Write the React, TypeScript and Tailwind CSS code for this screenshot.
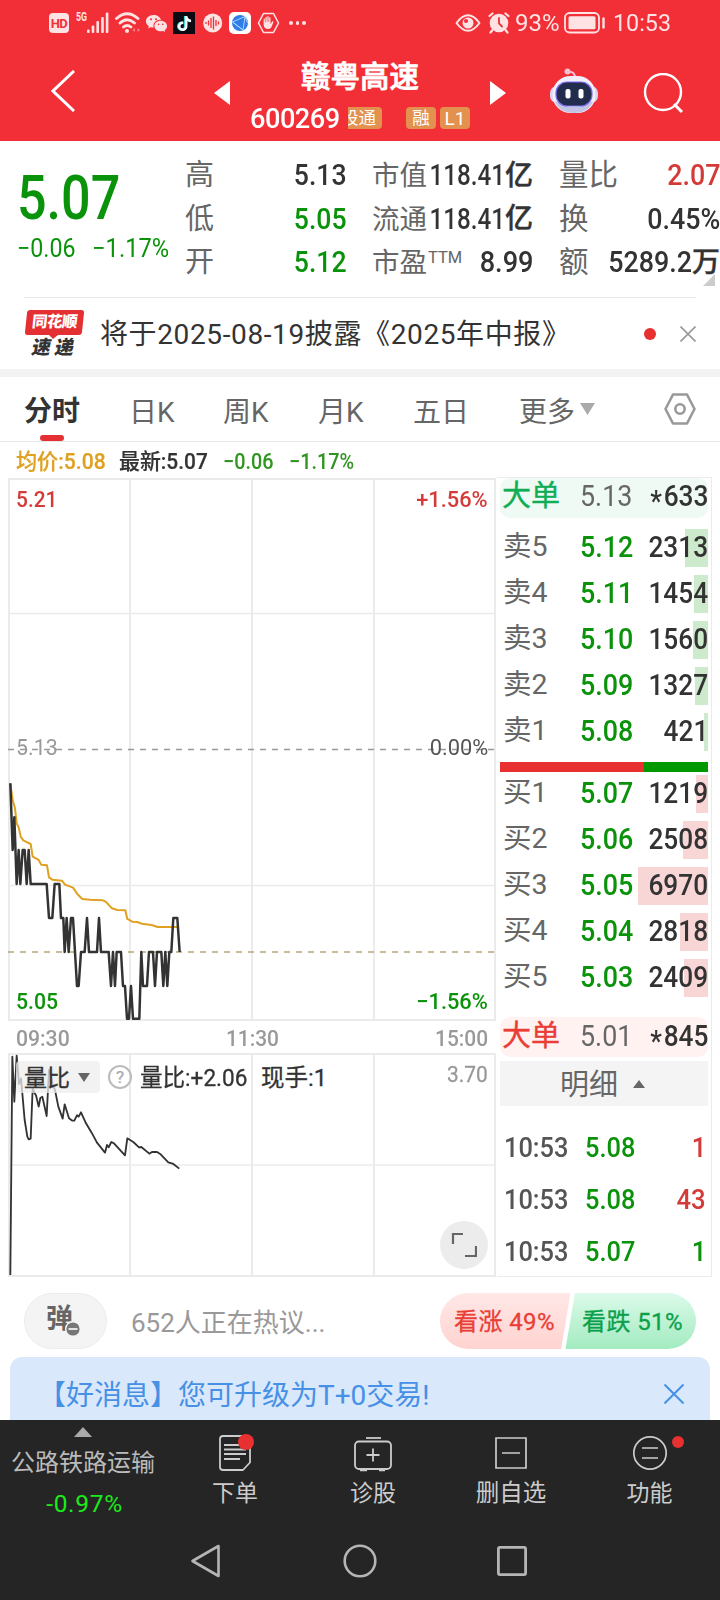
import { FaTiktok } from "react-icons/fa";
import { IoHandLeft } from "react-icons/io5";
import { RiWechatFill } from "react-icons/ri";

const green = "text-[#0a930a]";
const red = "text-[#d43a38]";
const dark = "text-[#333]";

const quoteColumns = [
  {
    labelSize: "text-[29px]",
    valueScale: "scale-x-[0.9]",
    rows: [
      { label: "高", value: "5.13", color: dark },
      { label: "低", value: "5.05", color: green },
      { label: "开", value: "5.12", color: green },
    ],
  },
  {
    labelSize: "text-[27.5px]",
    valueScale: "scale-x-[0.82]",
    rows: [
      { label: "市值", value: "118.41", unit: "亿", color: dark },
      { label: "流通", value: "118.41", unit: "亿", color: dark },
      { label: "市盈", sup: "TTM", value: "8.99", color: dark },
    ],
  },
  {
    labelSize: "text-[29.5px]",
    valueScale: "scale-x-[0.91]",
    rows: [
      { label: "量比", value: "2.07", color: red },
      { label: "换", value: "0.45%", color: dark },
      { label: "额", value: "5289.2", unit: "万", color: dark },
    ],
  },
];

const sells = [
  { name: "卖5", price: "5.12", volume: "2313", bar: 23 },
  { name: "卖4", price: "5.11", volume: "1454", bar: 14 },
  { name: "卖3", price: "5.10", volume: "1560", bar: 15 },
  { name: "卖2", price: "5.09", volume: "1327", bar: 13 },
  { name: "卖1", price: "5.08", volume: "421", bar: 4 },
];

const buys = [
  { name: "买1", price: "5.07", volume: "1219", bar: 12 },
  { name: "买2", price: "5.06", volume: "2508", bar: 25 },
  { name: "买3", price: "5.05", volume: "6970", bar: 70 },
  { name: "买4", price: "5.04", volume: "2818", bar: 28 },
  { name: "买5", price: "5.03", volume: "2409", bar: 24 },
];

const trades = [
  { time: "10:53", price: "5.08", volume: "1", color: red },
  { time: "10:53", price: "5.08", volume: "43", color: red },
  { time: "10:53", price: "5.07", volume: "1", color: green },
];

// Chart series, in thirds of a pixel
const priceLine =
  "31,130 38,330 43,232 50,432 56,330 61,432 68,330 74,330 80,432 86,330 92,432 140,432 147,534 157,534 164,432 178,432 183,534 190,534 194,636 200,534 206,636 213,534 219,534 231,738 236,738 243,636 254,636 261,534 267,636 291,636 297,534 303,636 326,636 333,738 339,636 345,738 350,636 363,636 369,738 375,738 381,836 387,836 393,738 399,836 418,836 424,636 429,738 441,738 447,636 459,636 465,738 471,636 484,636 490,738 496,636 502,738 508,636 514,636 520,534 532,534 539,636";
const averageLine =
  "31,130 38,180 45,205 50,250 56,262 62,290 70,301 92,312 98,350 116,360 124,374 141,376 147,412 157,419 186,422 195,434 219,443 232,462 247,477 270,479 308,481 317,485 336,505 352,510 376,511 382,537 397,545 412,546 425,551 455,555 473,561 535,561";
const ratioLine =
  "31,795 37,140 43,275 50,137 57,222 63,205 74,330 82,380 86,388 92,386 98,235 104,250 108,256 116,290 121,264 127,260 140,318 147,180 152,190 158,225 165,240 175,290 188,326 194,283 207,325 217,332 223,332 231,316 236,320 243,307 258,340 275,368 291,398 315,428 321,405 326,412 334,396 342,400 375,436 382,385 400,396 417,412 424,411 448,431 456,426 471,426 482,433 505,457 520,462 538,476";

const StatusBar = () => (
  <div className="flex h-[46px] items-center text-[#ffe3e4]">
    <div className="ml-[49px] flex h-5 w-5 items-center justify-center rounded bg-[#ffe3e4] text-[13px] font-bold leading-none tracking-[-0.5px] text-[#f22f37]">
      HD
    </div>
    <svg className="ml-[7px] h-6 w-[34px]" viewBox="0 0 34 24" fill="currentColor">
      <text x="0" y="10" fontSize="12" fontWeight="700" textLength="11" lengthAdjust="spacingAndGlyphs">5G</text>
      <rect x="11" y="18.500" width="2.600" height="3.500" rx="1" />
      <rect x="15.700" y="14.500" width="2.600" height="7.500" rx="1" />
      <rect x="20.400" y="10" width="2.600" height="12" rx="1" />
      <rect x="25.200" y="6" width="2.600" height="16" rx="1" />
      <rect x="29.800" y="1.500" width="2.600" height="20.500" rx="1" />
    </svg>
    <svg className="ml-[5px] h-6 w-[26px]" viewBox="0 0 26 24" fill="none" stroke="currentColor" strokeWidth="2.800" strokeLinecap="round">
      <path d="M1.500 7.500Q12 -2 23 7.500M5 12Q12 5.500 19.500 12M8.500 16Q12 13 16 16" />
      <circle cx="12" cy="20" r="1" fill="currentColor" strokeWidth="2" />
      <path d="M20 17v4l-2.500-2zM22.500 17v4l2.500-2z" stroke="none" fill="#f88085" />
    </svg>
    <RiWechatFill className="ml-1 h-[23px] w-[23px]" />
    <div className="ml-[5px] flex h-[22px] w-[22px] items-center justify-center bg-[#0d0a14] text-white">
      <FaTiktok className="h-[15px] w-[15px] drop-shadow-[-1px_0_0_#25d5d0]" />
    </div>
    <svg className="ml-2 h-5 w-5" viewBox="0 0 20 20">
      <circle cx="9.700" cy="10" r="9.500" fill="#ffe3e4" />
      <path d="M3 9v2M5.500 7.500v5M8 5v10M10.500 3.500v13M13 7v6M15.500 8.500v3" stroke="#f22f37" strokeWidth="1.300" />
    </svg>
    <svg className="ml-1.5 h-[22px] w-[22px]" viewBox="0 0 22 22">
      <rect width="22" height="22" rx="5" fill="#fff" />
      <circle cx="11" cy="11" r="8" fill="#2f7de8" />
      <path d="M3.500 10 16 4.500 14 18ZM3.500 10 14 18M16 4.500 18.500 11" fill="none" stroke="#b6dcff" strokeWidth="0.900" />
    </svg>
    <div className="relative ml-1.5 h-[22px] w-[23px]">
      <svg className="h-full w-full" viewBox="0 0 23 22" fill="none" stroke="currentColor" strokeWidth="1.600" strokeLinejoin="round">
        <path d="M6.500 1.500h10l5 9.500-5 9.500h-10L1.500 11z" />
      </svg>
      <IoHandLeft className="absolute left-[5px] top-1 h-[13px] w-[13px]" />
    </div>
    <div className="ml-[9px] flex gap-[3px]">
      <i className="h-[3.5px] w-[3.5px] rounded-full bg-[#ffe3e4]" />
      <i className="h-[3.5px] w-[3.5px] rounded-full bg-[#ffe3e4]" />
      <i className="h-[3.5px] w-[3.5px] rounded-full bg-[#ffe3e4]" />
    </div>
    <svg className="ml-[149px] h-[18px] w-[26px]" viewBox="0 0 26 18" fill="none" stroke="currentColor" strokeWidth="2">
      <path d="M1.500 9Q13-6.500 24.500 9 13 24.500 1.500 9Z" strokeLinejoin="round" />
      <circle cx="13" cy="9" r="5.500" fill="currentColor" stroke="none" />
      <circle cx="11" cy="7" r="2" fill="#f22f37" stroke="none" />
    </svg>
    <svg className="ml-[7px] h-[22px] w-[22px]" viewBox="0 0 22 22" fill="none" stroke="currentColor" strokeWidth="2.200" strokeLinecap="round">
      <circle cx="11" cy="11" r="9.300" fill="currentColor" stroke="none" />
      <path d="M1.500 4 4.500 1.500M20.500 4l-3-2.500M4.500 18l-2 2.500M17.500 18l2 2.500" />
      <path d="M11 6v5.500l3 3" stroke="#f22f37" strokeWidth="1.800" />
    </svg>
    <span className="ml-[5px] w-[44px] origin-left scale-x-[0.98] pt-px text-[24.500px] leading-none">93%</span>
    <svg className="ml-[5px] h-[22px] w-[42px]" viewBox="0 0 42 22" fill="none" stroke="currentColor" strokeWidth="1.800">
      <rect x="1" y="1" width="34" height="19.500" rx="4.500" />
      <rect x="4.500" y="4.200" width="27" height="13" rx="1.500" fill="currentColor" stroke="none" />
      <path d="M39.500 6.500v9" strokeWidth="2.400" strokeLinecap="round" />
    </svg>
    <span className="ml-[7px] w-[60px] origin-left scale-x-[0.95] pt-px text-[24.500px] leading-none">10:53</span>
  </div>
);

const RobotIcon = () => (
  <svg className="ml-[44px] h-[46px] w-12" viewBox="0 0 48 46">
    <path d="M18 4q7-1 7 6" fill="none" stroke="#f5c3da" strokeWidth="2" />
    <circle cx="17.500" cy="3.500" r="3" fill="#f3bfd2" />
    <rect x="0" y="18" width="48" height="17" rx="7" fill="#d9d3ee" />
    <rect x="2.500" y="8" width="43" height="37" rx="18" fill="#f1effb" />
    <path d="M5 33q19 12 38 0-4 12-19 12T5 33z" fill="#c3c4e4" />
    <rect x="6" y="14" width="36" height="24" rx="11" fill="#222c4c" stroke="#7b6cf0" strokeWidth="1.200" />
    <rect x="15.500" y="21" width="5" height="9.500" rx="2" fill="#fff" />
    <rect x="28.500" y="21" width="5" height="9.500" rx="2" fill="#fff" />
  </svg>
);

const Header = () => (
  <header className="h-[141px] bg-[#f22f37] text-white">
    <StatusBar />
    <div className="flex h-[90px] items-center">
      <svg className="ml-[51px] h-[42px] w-6" viewBox="0 0 24 42" fill="none" stroke="#fff" strokeWidth="3">
        <path d="M23 1 2 21l21 20" />
      </svg>
      <svg className="ml-[139px] mt-1 h-6 w-4" viewBox="0 0 16 24" fill="#fff">
        <path d="M16 0v24L0 12z" />
      </svg>
      <div className="ml-[15px] mt-3 w-[245px]">
        <h1 className="pl-14 text-[29.500px] font-medium leading-[41px] [-webkit-text-stroke:0.8px]">赣粤高速</h1>
        <div className="flex h-[40px] items-center">
          <span className="ml-[5px] w-[98px] origin-left scale-x-[0.97] pt-[3px] text-[28px] font-medium leading-none tracking-[-0.500px]">600269</span>
          <span className="flex h-[22px] w-[34px] justify-end overflow-hidden rounded-r-sm bg-[#e2914f] pr-1.5 text-[17.500px] leading-[23px]">
            <span className="shrink-0">股通</span>
          </span>
          <span className="ml-6 h-[22px] w-[30px] rounded-sm bg-[#e2914f] text-center text-[17.500px] leading-[23px]">融</span>
          <span className="ml-1 h-[22px] w-[30px] rounded-sm bg-[#e2914f] text-center text-[19px] leading-[24px]">L1</span>
        </div>
      </div>
      <svg className="mt-1 h-6 w-4" viewBox="0 0 16 24" fill="#fff">
        <path d="M0 0v24l16-12z" />
      </svg>
      <RobotIcon />
      <svg className="ml-[45px] mt-1 h-10 w-10" viewBox="0 0 40 40" fill="none" stroke="#fff" strokeWidth="2.400">
        <circle cx="20" cy="19" r="18" />
        <path d="m31 31 8 8" strokeWidth="3" />
      </svg>
    </div>
  </header>
);

const Quote = () => (
  <section className="relative flex h-[156px] pt-[13px]">
    <div className={`w-[186px] pl-[17px] ${green}`}>
      <div className="mt-[12px] w-[120px] origin-left scale-x-[0.84] text-[62px] font-medium leading-[64px]">5.07</div>
      <div className="mt-[3px] flex text-[25.500px] leading-[31px]">
        <span className="w-[75px] origin-left scale-x-[0.91]">−0.06</span>
        <span className="origin-left scale-x-[0.93]">−1.17%</span>
      </div>
    </div>
    <div className="flex gap-[26px]">
      {quoteColumns.map((column, i) => (
        <div key={i} className="w-[161px]">
          {column.rows.map((item) => (
            <div key={item.label} className="flex h-[43.500px] items-center justify-between whitespace-nowrap leading-none">
              <span className={`flex w-0 text-[#666] ${column.labelSize}`}>
                {item.label}
                {"sup" in item && <span className="ml-px mt-[1px] text-[16.500px] leading-none">{item.sup}</span>}
              </span>
              <span className={`flex items-center text-[29.500px] font-medium ${item.color}`}>
                <span className={`origin-right ${"sup" in item ? "scale-x-[0.92]" : column.valueScale}`}>{item.value}</span>
                {"unit" in item && <span className="text-[28px] [-webkit-text-stroke:0.4px]">{item.unit}</span>}
              </span>
            </div>
          ))}
        </div>
      ))}
    </div>
    <svg className="absolute bottom-[11px] right-[5px] h-3 w-3" viewBox="0 0 12 12" fill="#ccc">
      <path d="M12 0v12H0z" />
    </svg>
  </section>
);

const NewsRow = () => (
  <section className="mx-6 flex h-[72px] items-center border-t border-[#e6e6e6]">
    <div className="flex w-[60px] flex-col items-center">
      <div className="flex h-[25px] w-[57px] -skew-x-6 items-center justify-center rounded-[3px] bg-[#e53033] text-[15.500px] font-black leading-none tracking-[-0.500px] text-white">
        同花顺
      </div>
      <svg className="h-1 w-3" viewBox="0 0 12 4" fill="#e53033">
        <path d="M1 0h9L5 4z" />
      </svg>
      <div className="-mt-[1px] ml-[-2px] flex -skew-x-12 gap-1 text-[19px] font-black leading-[20px] text-[#333]">
        <span>速</span>
        <span>递</span>
      </div>
    </div>
    <p className="ml-[16px] whitespace-nowrap pt-[3px] text-[28px] leading-none tracking-[0.620px] text-[#333]">将于2025-08-19披露《2025年中报》</p>
    <i className="ml-auto h-3 w-3 rounded-full bg-[#e83030]" />
    <svg className="ml-6 h-4 w-4" viewBox="0 0 16 16" stroke="#999" strokeWidth="1.600">
      <path d="m.5.500 15 15M15.500.500l-15 15" />
    </svg>
  </section>
);

const Tabs = () => (
  <nav className="flex h-[65px] items-center border-b border-[#e6e6e6] text-[28px] leading-none text-[#666]">
    <div className="ml-6 flex h-full w-[105px] flex-col justify-end font-bold text-[#333]">
      分时
      <i className="ml-4 mt-[9px] h-1.5 w-6 rounded-full bg-[#e53033]" />
    </div>
    <span className="w-[94px] pt-[7px]">日K</span>
    <span className="w-[95px] pt-[7px]">周K</span>
    <span className="w-[95px] pt-[7px]">月K</span>
    <span className="w-[106px] pt-[7px]">五日</span>
    <span className="pt-[7px]">更多</span>
    <svg className="ml-[5px] h-3 w-[15px]" viewBox="0 0 15 12" fill="#aaa">
      <path d="M0 0h15L7.500 12z" />
    </svg>
    <svg className="ml-[69px] h-8 w-8" viewBox="0 0 32 32" fill="none" stroke="#999" strokeWidth="2.600" strokeLinejoin="round">
      <path d="M9 1.500h14L30.500 16 23 30.500H9L1.500 16z" />
      <circle cx="16" cy="16" r="4.700" />
    </svg>
  </nav>
);

const Charts = () => (
  <div className="relative h-[800px] w-[497px] text-[22.500px] leading-none">
    <svg className="block h-[800px] w-[497px]" viewBox="0 477 497 800" fill="none">
      <g stroke="#ebebeb" strokeWidth="2">
        <path d="M8 479h488M8 1020h488M8 1054h488M8 1276h488" />
        <path d="M9 478v543M130 478v543M252 478v543M374 478v543M495 478v543" />
        <path d="M9 1053v224M130 1053v224M252 1053v224M374 1053v224M495 1053v224" />
        <path d="M8 613.500h488M8 885.500h488M8 1165h488" strokeWidth="1.500" />
      </g>
      <path d="M8 749.500h487" stroke="#999" strokeWidth="1.500" strokeDasharray="6 6" />
      <path d="M8 952h487" stroke="#b8a878" strokeWidth="1.700" strokeDasharray="6 6" />
      <g strokeLinejoin="round">
        <polyline points={averageLine} transform="translate(0 740) scale(.3333)" stroke="#e0a020" strokeWidth="6" />
        <polyline points={priceLine} transform="translate(0 740) scale(.3333)" stroke="#333" strokeWidth="7.500" />
        <polyline points={ratioLine} transform="translate(0 1010) scale(.3333)" stroke="#333" strokeWidth="5.500" />
      </g>
    </svg>

    {/* Axis labels */}
    <span className={`absolute left-4 top-[11px] origin-left scale-x-[0.93] font-medium ${red}`}>5.21</span>
    <span className={`absolute right-[9px] top-[11px] origin-right scale-x-[0.97] font-medium ${red}`}>+1.56%</span>
    <span className="absolute left-4 top-[259px] origin-left scale-x-[0.95] text-[#999]">5.13</span>
    <span className="absolute right-[9px] top-[259px] origin-right scale-x-[0.97] text-[#555]">0.00%</span>
    <span className={`absolute left-4 top-[513px] origin-left scale-x-[0.94] font-medium ${green}`}>5.05</span>
    <span className={`absolute right-[9px] top-[513px] origin-right scale-x-[0.97] font-medium ${green}`}>−1.56%</span>
    <div className="absolute left-4 right-[9px] top-[550px] flex justify-between text-[#999]">
      <span className="origin-left scale-x-[0.94] font-medium">09:30</span>
      <span className="scale-x-[0.93] pl-[2px] font-medium">11:30</span>
      <span className="origin-right scale-x-[0.93] font-medium">15:00</span>
    </div>
    <div className="absolute left-4 right-[9px] top-[584px] flex h-8 items-center text-[#333] [-webkit-text-stroke:0.3px]">
      <div className="flex h-8 w-[84px] items-center rounded bg-[#eeeeee]/75 pl-2">
        <span className="pt-[3px] text-[23px]">量比</span>
        <svg className="ml-[8px] h-[9px] w-3" viewBox="0 0 12 9" fill="#666">
          <path d="M0 0h12L6 9z" />
        </svg>
      </div>
      <span className="ml-2 flex h-6 w-6 items-center justify-center rounded-full border-2 border-[#bbb] text-[17px] text-[#aaa]">?</span>
      <span className="ml-2 w-[121px] origin-left scale-x-[0.96] whitespace-nowrap pt-[3px] text-[23.500px]">量比:+2.06</span>
      <span className="whitespace-nowrap pt-[3px] text-[23.500px]">现手:1</span>
      <span className="-mt-1.5 ml-auto origin-right scale-x-[0.93] text-[#999]">3.70</span>
    </div>
    <div className="absolute bottom-[8px] right-[9px] flex h-12 w-12 items-center justify-center rounded-full bg-[#ececec]">
      <svg className="h-[26px] w-[26px]" viewBox="0 0 26 26" fill="none" stroke="#666" strokeWidth="2.200">
        <path d="M2 12V2h10M25 14v10H14" />
      </svg>
    </div>
  </div>
);

const BookRow = ({ name, price, volume, bar, side }) => (
  <div className="relative flex h-[38px] items-center pb-[1px] pl-[3px] text-[28.500px] leading-none">
    <i className={`absolute right-0 top-0 h-[38px] ${side === "sell" ? "bg-[#cdeacd]" : "bg-[#f9d6d6]"}`} style={{ width: bar }} />
    <span className="relative w-[77px] text-[#666]">{name}</span>
    <span className={`relative origin-left scale-x-[0.91] text-[29.500px] font-medium ${green}`}>{price}</span>
    <span className="relative ml-auto origin-right scale-x-[0.89] text-[29.500px] font-medium text-[#333]">{volume}</span>
  </div>
);

const BigOrder = ({ className, price, volume }) => (
  <div className={`flex h-10 items-center rounded-[10px] pl-[2px] text-[29px] leading-none ${className}`}>
    <span className="w-[78px] [-webkit-text-stroke:0.4px]">大单</span>
    <span className="origin-left scale-x-[0.91] text-[29.500px] text-[#666]">{price}</span>
    <span className="ml-auto flex origin-right scale-x-[0.89] text-[29.500px] font-medium text-[#333]">
      <span className="mt-[5px] -mb-[5px] pr-0.5">*</span>
      {volume}
    </span>
  </div>
);

const OrderBook = () => (
  <div className="h-[800px] w-[215px] border border-l-0 border-[#ebebeb] pl-[3px] pr-[3px]">
    <BigOrder className="bg-[#f0faf5] pb-[3px] text-[#0fae55]" price="5.13" volume="633" />
    <div className="mt-[11px] flex flex-col gap-2">
      {sells.map((row) => (
        <BookRow key={row.name} side="sell" {...row} />
      ))}
    </div>
    <div className="mt-[11px] flex h-[10px]">
      <i className="w-[144px] bg-[#e83030]" />
      <i className="grow bg-[#009900]" />
    </div>
    <div className="mb-5 mt-[3px] flex flex-col gap-2">
      {buys.map((row) => (
        <BookRow key={row.name} side="buy" {...row} />
      ))}
    </div>
    <BigOrder className="bg-[#fff2f1] pb-[1px] text-[#ea3d35]" price="5.01" volume="845" />
    <div className="mt-1 flex h-[45px] items-center bg-[#f4f4f4] pl-[60px] text-[29px] leading-none text-[#666]">
      <span className="pt-1">明细</span>
      <svg className="ml-[15px] h-2 w-3" viewBox="0 0 12 8" fill="#666">
        <path d="M0 8h12L6 0z" />
      </svg>
    </div>
    <div className="mt-[16px]">
      {trades.map((trade, i) => (
        <div key={i} className="flex h-[52px] items-center pl-1 pr-[2px] text-[27px] leading-none">
          <span className="w-[81px] origin-left scale-x-[0.94] font-medium text-[#555]">{trade.time}</span>
          <span className={`origin-left scale-x-[0.94] font-medium ${green}`}>{trade.price}</span>
          <span className={`ml-auto origin-right scale-x-[0.95] font-medium ${trade.color}`}>{trade.volume}</span>
        </div>
      ))}
    </div>
  </div>
);

const Discussion = () => (
  <section className="flex h-[80px] items-center px-6 pt-[8px]">
    <div className="flex h-14 w-[83px] items-center justify-center rounded-full border border-[#ececec] bg-[#f4f4f4]">
      <div className="relative -ml-3 -mt-1 text-[27px] font-bold leading-none text-[#666]">
        弹
        <svg className="absolute -right-2 bottom-[-4px] h-4 w-4" viewBox="0 0 16 16">
          <circle cx="8" cy="8" r="7.300" fill="#777" stroke="#f4f4f4" strokeWidth="1.400" />
          <path d="M3.500 8h9" stroke="#fff" strokeWidth="1.600" />
        </svg>
      </div>
    </div>
    <span className="ml-[24px] pt-[3px] text-[26px] leading-none text-[#999]">652人正在热议...</span>
    <div className="relative ml-auto flex h-14 w-64 items-center overflow-hidden rounded-full text-[24px] leading-none [-webkit-text-stroke:0.3px]">
      <svg className="absolute inset-0 h-14 w-64" viewBox="0 0 256 56">
        <defs>
          <linearGradient id="rise" x2="0" y2="1">
            <stop stopColor="#ffe8e7" />
            <stop offset="1" stopColor="#ffd3d0" />
          </linearGradient>
          <linearGradient id="fall" x2="0" y2="1">
            <stop stopColor="#dcfaea" />
            <stop offset="1" stopColor="#a2ebc0" />
          </linearGradient>
        </defs>
        <path d="M0 0h130.500L121 56H0z" fill="url(#rise)" stroke="none" />
        <path d="M135 0h121v56H125.500z" fill="url(#fall)" stroke="none" />
      </svg>
      <span className="relative ml-3.5 w-[128px] pt-[2px] tracking-[0.400px] text-[#ea3d35]">看涨 49%</span>
      <span className="relative whitespace-nowrap pt-[2px] tracking-[0.400px] text-[#0ba04b]">看跌 51%</span>
    </div>
  </section>
);

const Banner = () => (
  <section className="mx-2.5 flex h-[63px] items-center rounded-t-xl bg-[#d9e8fb] text-[28px] leading-none text-[#4690e6]">
    <span className="ml-7 whitespace-nowrap pt-[15px]">【好消息】您可升级为T+0交易!</span>
    <svg className="ml-auto mr-[26px] mt-[10px] h-5 w-5" viewBox="0 0 20 20" stroke="currentColor" strokeWidth="2">
      <path d="m.5.500 19 19M19.500.500l-19 19" />
    </svg>
  </section>
);

const BottomBar = () => (
  <footer className="h-[180px] bg-[#252525] text-[#ccc]">
    <div className="flex h-[101px] text-[23px] leading-none">
      <div className="flex w-[166px] flex-col items-center pt-[7px]">
        <svg className="h-2.5 w-[18px]" viewBox="0 0 18 10" fill="#aaa">
          <path d="M0 10h18L9 0z" />
        </svg>
        <span className="mt-[14px] text-[24px] text-[#bbb]">公路铁路运输</span>
        <span className="ml-[3px] mt-[17px] text-[24.500px] tracking-[0.700px] text-[#1bea1b]">-0.97%</span>
      </div>
      <div className="flex w-[138px] flex-col items-center pt-[14px]">
        <div className="relative h-[38px] w-[34px]">
          <svg className="h-full w-full" viewBox="0 0 34 38" fill="none" stroke="#ccc" strokeWidth="1.800">
            <path d="M5 2h24q3 0 3 3v23.500L25 36H5q-3 0-3-3V5q0-3 3-3z" strokeLinejoin="round" />
            <path d="M6 11h20M6 15.500h22M6 20h22M6 25h16" />
          </svg>
          <i className="absolute left-5 top-0 h-4 w-4 rounded-full bg-[#e83030]" />
        </div>
        <span className="mt-[10px]">下单</span>
      </div>
      <div className="flex w-[138px] flex-col items-center pt-[14px]">
        <svg className="h-[38px] w-10" viewBox="0 0 40 38" fill="none" stroke="#ccc" strokeWidth="1.800">
          <path d="M13 4h15" />
          <rect x="2" y="7.500" width="36" height="27.500" rx="4" />
          <path d="M20 14.500v13M13.500 21h13" />
          <path d="M7 36h7M26 36h6" strokeWidth="2.400" />
        </svg>
        <span className="mt-[10px]">诊股</span>
      </div>
      <div className="flex w-[138px] flex-col items-center pt-[14px]">
        <svg className="h-[38px] w-[34px]" viewBox="0 0 34 38" fill="none" stroke="#ccc" strokeWidth="1.700">
          <path d="M2 4h30v30H2zM8 19h18" />
        </svg>
        <span className="mt-[10px] text-[23.500px]">删自选</span>
      </div>
      <div className="flex w-[139px] flex-col items-center pt-[14px]">
        <div className="relative h-[38px] w-9">
          <svg className="h-full w-full" viewBox="0 0 36 38" fill="none" stroke="#ccc" strokeWidth="1.700">
            <circle cx="18" cy="19" r="16.200" />
            <path d="M10 14h16M10 24h16" />
          </svg>
          <i className="absolute -right-4 top-[2px] h-3 w-3 rounded-full bg-[#e83030]" />
        </div>
        <span className="mt-[10px]">功能</span>
      </div>
    </div>
    {/* System navigation */}
    <div className="flex h-[79px] items-center pl-[190px]">
      <svg className="h-[34px] w-[31px]" viewBox="0 0 31 34" fill="none" stroke="#b5b5b5" strokeWidth="2.600" strokeLinejoin="round">
        <path d="M28.500 2v30L2.500 17z" />
      </svg>
      <svg className="ml-[122px] h-[34px] w-[34px]" viewBox="0 0 34 34" fill="none" stroke="#b5b5b5" strokeWidth="2.600">
        <circle cx="17" cy="17" r="15.300" />
      </svg>
      <svg className="ml-[120px] h-[30px] w-[30px]" viewBox="0 0 30 30" fill="none" stroke="#b5b5b5" strokeWidth="2.800">
        <rect x="1.400" y="1.400" width="27.200" height="27.200" rx="1.500" />
      </svg>
    </div>
  </footer>
);

export default function App() {
  return (
    <div lang="zh-CN" className="flex h-[1600px] w-[720px] flex-col overflow-hidden bg-white font-['Roboto','Noto_Sans_CJK_SC',sans-serif]">
      <Header />
      <Quote />
      <NewsRow />
      <div className="h-2 bg-[#f3f3f3]" />
      <Tabs />
      <div className="flex h-[35px] items-center pt-1 text-[22px] leading-none">
        <span className="ml-4 w-[103px] origin-left scale-x-[0.96] font-medium text-[#e0a020] [-webkit-text-stroke:0.2px]">均价:5.08</span>
        <span className="w-[104px] origin-left scale-x-[0.95] font-medium text-[#333] [-webkit-text-stroke:0.2px]">最新:5.07</span>
        <span className="w-[66px] origin-left scale-x-[0.9] font-medium text-[#2f9420]">−0.06</span>
        <span className="origin-left scale-x-[0.9] font-medium text-[#2f9420]">−1.17%</span>
      </div>
      <main className="flex h-[800px]">
        <Charts />
        <OrderBook />
      </main>
      <Discussion />
      <Banner />
      <BottomBar />
    </div>
  );
}
